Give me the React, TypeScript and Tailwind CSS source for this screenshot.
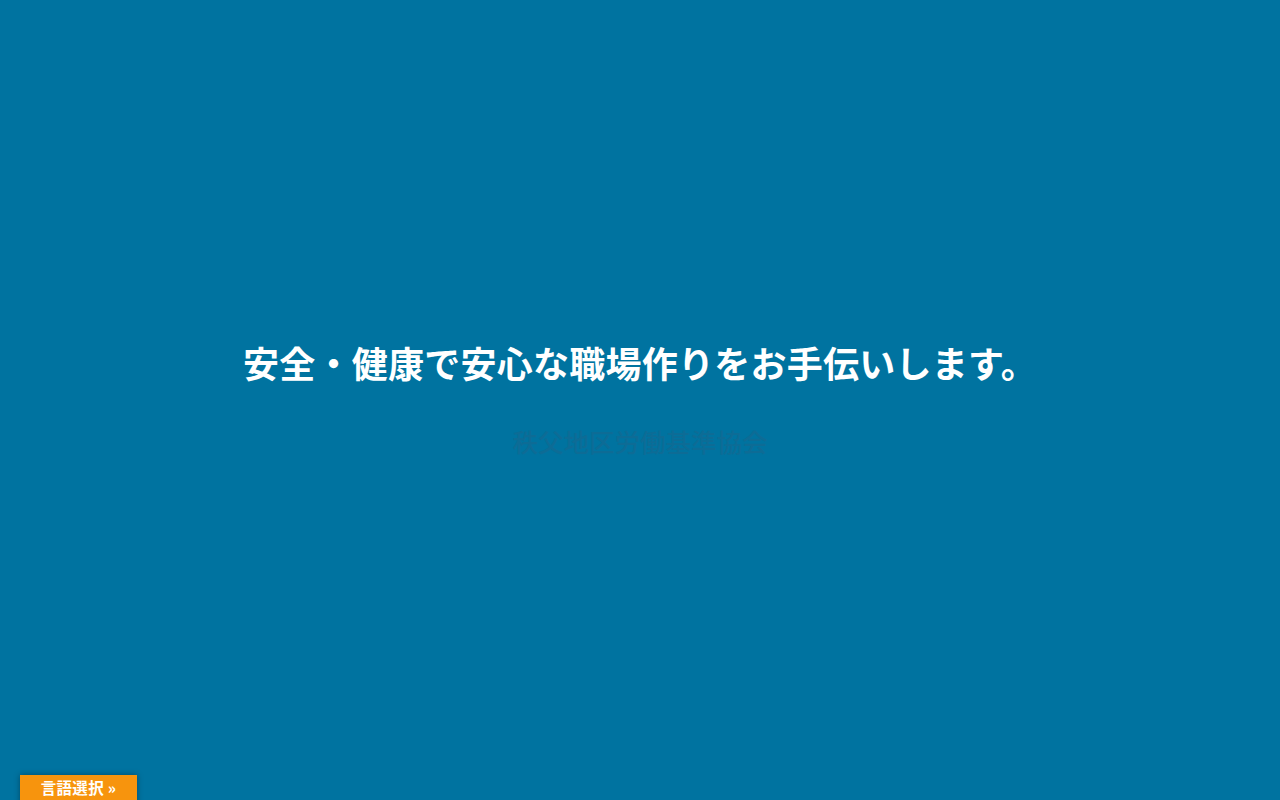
export default function App() {
  return (
    <div className="relative flex h-[800px] w-full flex-col items-center overflow-hidden bg-[#0073a0] font-['Noto_Sans_CJK_JP','Noto_Sans',sans-serif]">
      <div className="flex flex-col items-center pt-[338px]">
        <h1 className="text-[36px] font-bold leading-[48px] tracking-[0.25px] text-white">安全・健康で安心な職場作りをお手伝いします。</h1>
        <p className="mt-[37px] text-[25.5px] font-medium leading-[36px] text-[#0d6c96]">秩父地区労働基準協会</p>
      </div>
      <button className="absolute left-[20px] top-[775px] flex h-[30px] w-[117px] items-start justify-center bg-[#f7940d] pt-[2px] text-[15.5px] font-bold leading-[20px] tracking-[0.3px] text-white shadow-[0_0_6px_rgba(0,0,0,0.35)]">
        言語選択 »
      </button>
    </div>
  );
}
